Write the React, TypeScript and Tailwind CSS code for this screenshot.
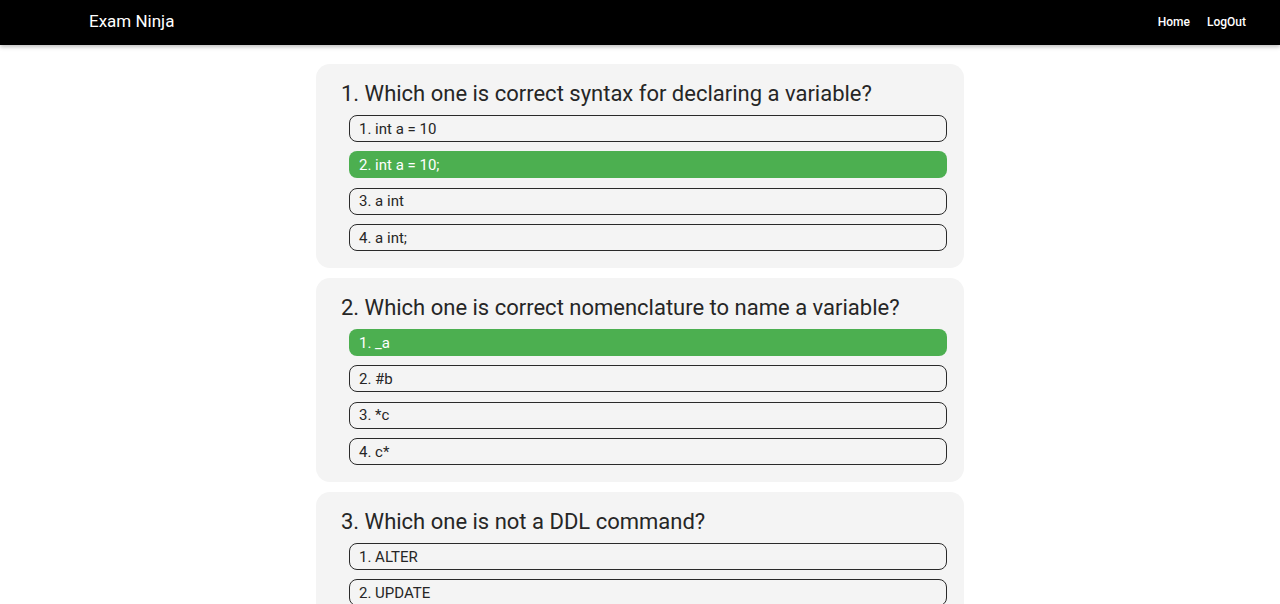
import React from "react";

const questions = [
  {
    q: "1. Which one is correct syntax for declaring a variable?",
    opts: ["1. int a = 10", "2. int a = 10;", "3. a int", "4. a int;"],
    sel: 1,
  },
  {
    q: "2. Which one is correct nomenclature to name a variable?",
    opts: ["1. _a", "2. #b", "3. *c", "4. c*"],
    sel: 0,
  },
  {
    q: "3. Which one is not a DDL command?",
    opts: ["1. ALTER", "2. UPDATE", "3. CREATE", "4. DROP"],
    sel: -1,
  },
];

export default function App() {
  return (
    <div className="min-h-screen bg-white text-[#222]" style={{ fontFamily: "Roboto, 'Noto Sans', sans-serif" }}>
      <header className="h-[45px] bg-black flex items-center justify-between pl-[89px] pr-[34px] shadow-[0_2px_4px_rgba(0,0,0,0.25)] relative z-10">
        <span className="text-white text-[17px] pb-[2px]">Exam Ninja</span>
        <nav className="flex items-center gap-[17px] text-white text-[12px] font-medium pb-[1px]">
          <span>Home</span>
          <span>LogOut</span>
        </nav>
      </header>
      <main className="flex flex-col items-center gap-[10px] pt-[19px] pb-6">
        {questions.map((qq, i) => (
          <section key={i} className="w-[648px] bg-[#f4f4f4] rounded-[14px] pt-[16px] pb-[17px] pl-[25px] pr-[17px]">
            <h2 className="text-[22px] leading-[28px] text-[#262626]">{qq.q}</h2>
            <div className="mt-[7px] ml-[8px] flex flex-col gap-[9.33px]">
              {qq.opts.map((o, j) =>
                j === qq.sel ? (
                  <div key={j} className="h-[27px] rounded-[8px] bg-[#4caf50] text-white text-[15px] flex items-center px-[10px] pt-[1px]">
                    {o}
                  </div>
                ) : (
                  <div key={j} className="h-[27px] rounded-[8px] border border-[#2a2a2a] text-[#262626] text-[15px] flex items-center px-[9px] pt-[1px]">
                    {o}
                  </div>
                )
              )}
            </div>
          </section>
        ))}
      </main>
    </div>
  );
}
